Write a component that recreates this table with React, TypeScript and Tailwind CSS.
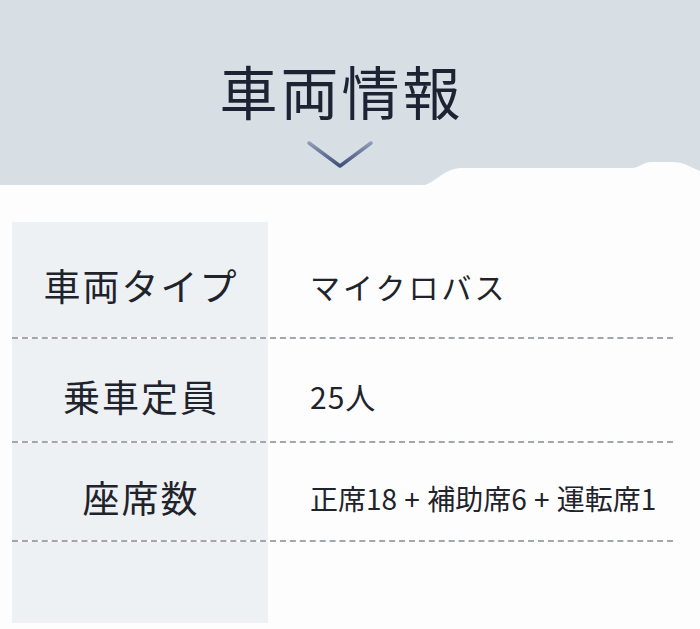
import React from "react";

const font = { fontFamily: '"Noto Sans CJK JP", "Noto Sans", sans-serif' };

function Row({ label, value, h, valueClass }: { label: string; value: string; h: string; valueClass: string }) {
  return (
    <div className={`grid grid-cols-[256px_1fr] border-b-2 border-dashed border-[#a3a7ab] ${h}`}>
      <div className="flex items-center justify-center bg-[#eef1f3] pt-[12px]">
        <span className="text-[37px] leading-none text-[#1f232b] tracking-[2px] pl-[2px]">{label}</span>
      </div>
      <div className="flex items-center pl-[42px] pt-[12px]">
        <span className={`${valueClass} leading-none text-[#1f232b] whitespace-pre`}>{value}</span>
      </div>
    </div>
  );
}

export default function App() {
  return (
    <div className="w-[700px] h-[629px] bg-[#d7dfe5] overflow-hidden flex flex-col" style={font}>
      <div className="h-[185px] flex flex-col items-center pt-[61px] pr-[20px] shrink-0">
        <h1 className="text-[58px] leading-none font-normal text-[#1c2433] tracking-[3px] pl-[3px]">車両情報</h1>
        <svg width="70" height="32" viewBox="0 0 70 32" className="mt-[20px]">
          <defs>
            <linearGradient id="cg" x1="0" y1="0" x2="0" y2="1">
              <stop offset="0" stopColor="#8e9bb6" />
              <stop offset="1" stopColor="#3e4f78" />
            </linearGradient>
          </defs>
          <path d="M4 4 L35 27 L66 4" fill="none" stroke="url(#cg)" strokeWidth="3.5" strokeLinecap="round" strokeLinejoin="round" />
        </svg>
      </div>
      <div className="relative flex-1 bg-[#fdfdfd] pt-[37px] pl-[12px]">
        <svg className="absolute left-0 top-[-24px]" width="700" height="25" viewBox="0 0 700 25" preserveAspectRatio="none">
          <path d="M0 25 L418 25 C435 25 440 8 462 7 L632 7 C640 7 642 1 652 1 L672 1 C684 1 690 6 700 10 L700 25 Z" fill="#fdfdfd" />
        </svg>
        <div className="w-[661px]">
          <Row label="車両タイプ" value="マイクロバス" h="h-[117px]" valueClass="text-[30px] tracking-[3px]" />
          <Row label="乗車定員" value="25人" h="h-[104px]" valueClass="text-[30px] tracking-[1px]" />
          <Row label="座席数" value="正席18 + 補助席6 + 運転席1" h="h-[99px]" valueClass="text-[28px] [word-spacing:1px]" />
          <div className="grid grid-cols-[256px_1fr] h-[81px]">
            <div className="bg-[#eef1f3]" />
            <div />
          </div>
        </div>
      </div>
    </div>
  );
}
